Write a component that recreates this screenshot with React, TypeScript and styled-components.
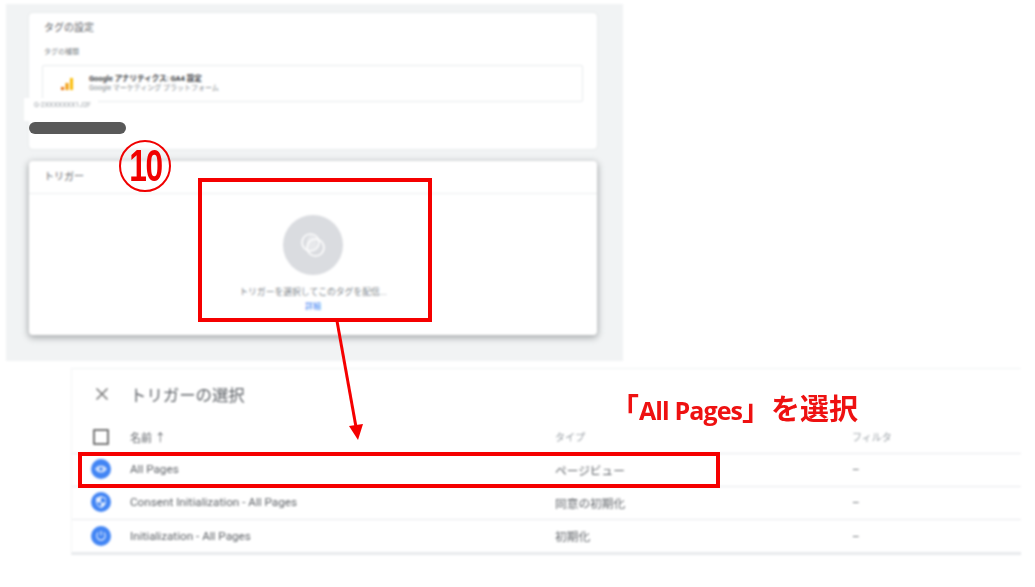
import styled, { createGlobalStyle } from "styled-components"

const GlobalStyle = createGlobalStyle`
html, body {
    margin: 0;
    padding: 0;
    background: #fff;
}
body {
    font-family: Roboto, "Noto Sans CJK JP", sans-serif;
    color: #5f6368;
}
`

const Page = styled.div`
position: relative;
width: 1035px;
height: 587px;
overflow: hidden;
padding: 4px 0 0 6px;
box-sizing: border-box;
`

const Blur = styled.div`
filter: blur(0.8px);
`

const TagPanel = styled.div`
width: 617px;
height: 357px;
box-sizing: border-box;
padding: 9px 26px 0 23px;
background: #f1f3f4;
display: flex;
flex-direction: column;
gap: 12px;
`

const Card = styled.div<{ $height: number; $raised?: boolean }>`
height: ${(p) => p.$height}px;
box-sizing: border-box;
background: #fff;
border-radius: 4px;
box-shadow: ${(p) => (p.$raised ? "0 2px 6px 1px rgba(60, 64, 67, 0.4)" : "0 0 2px rgba(60, 64, 67, 0.12)")};
display: flex;
flex-direction: column;
`

const SettingsBody = styled.div`
padding: 8px 14px 0 15px;
`

const CardTitle = styled.div`
font-size: 10px;
line-height: 14px;
color: #5f6368;
`

const SmallLabel = styled.div`
margin-top: 12px;
font-size: 7px;
line-height: 10px;
color: #80868b;
`

const TypeBox = styled.div`
margin: 8px 0 0 -2px;
height: 37px;
box-sizing: border-box;
border: 1px solid #e8eaed;
border-radius: 2px;
display: flex;
align-items: center;
padding-left: 17px;
gap: 15px;
`

const TypeText = styled.div`
display: flex;
flex-direction: column;
`

const TypeName = styled.span`
font-size: 7.5px;
line-height: 10px;
font-weight: 700;
color: #3c4043;
`

const TypeVendor = styled.span`
font-size: 7px;
line-height: 9px;
color: #80868b;
`

const TriggerHeader = styled.div`
height: 33px;
box-sizing: border-box;
padding: 9px 15px 0;
border-bottom: 1px solid #eceef0;
`

const TriggerBody = styled.div`
display: flex;
flex-direction: column;
align-items: center;
padding: 21px 0 0 0;
width: 568px;
`

const EmptyCircle = styled.div`
width: 60px;
height: 60px;
border-radius: 50%;
background: #dadce0;
display: flex;
align-items: center;
justify-content: center;
`

const EmptyText = styled.div`
margin-top: 11px;
font-size: 8.8px;
line-height: 12px;
color: #80868b;
`

const MoreLink = styled.div`
margin-top: 3px;
font-size: 8px;
line-height: 11px;
color: #4285f4;
`

const PickerPanel = styled.div`
margin: 7px 0 0 65px;
width: 950px;
height: 187px;
box-sizing: border-box;
border-top: 1px solid #f1f3f4;
border-left: 1px solid #f4f5f6;
border-bottom: 3px solid #e8eaed;
`

const PickerHeader = styled.div`
height: 51px;
box-sizing: border-box;
display: flex;
align-items: center;
padding: 0 0 2px 23px;
gap: 21px;
`

const PickerTitle = styled.div`
font-size: 16.4px;
color: #5f6368;
`

const Row = styled.div<{ $head?: boolean }>`
height: ${(p) => (p.$head ? 34 : 33)}px;
box-sizing: border-box;
display: grid;
grid-template-columns: 58px 425px 297px 1fr;
align-items: center;
padding-bottom: ${(p) => (p.$head ? 0 : 2)}px;
font-size: ${(p) => (p.$head ? 11 : 11.7)}px;
border-bottom: 1px solid #e8eaed;
&:last-child {
    border-bottom: none;
}
`

const IconCell = styled.div`
display: flex;
justify-content: center;
`

const CheckBox = styled.div`
width: 12px;
height: 12px;
border: 2px solid #757575;
border-radius: 1px;
`

const BlueDot = styled.div`
width: 20px;
height: 20px;
border-radius: 50%;
background: #4285f4;
display: flex;
align-items: center;
justify-content: center;
`

const NameCell = styled.div`
color: #5f6368;
display: flex;
align-items: center;
gap: 4px;
`

const HeadCell = styled.div`
color: #9aa0a6;
font-size: 10px;
`

const Patch = styled.div`
position: absolute;
left: 24px;
top: 98px;
width: 74px;
height: 23px;
background: #fff;
font-size: 7px;
line-height: 14px;
color: #9aa0a6;
padding-left: 10px;
box-sizing: border-box;
filter: blur(0.8px);
`

const RedactOval = styled.div`
position: absolute;
left: 29px;
top: 122px;
width: 97px;
height: 12px;
border-radius: 6px;
background: #595959;
filter: blur(0.5px);
`

const RedBox = styled.div<{ $x: number; $y: number; $w: number; $h: number }>`
position: absolute;
left: ${(p) => p.$x}px;
top: ${(p) => p.$y}px;
width: ${(p) => p.$w}px;
height: ${(p) => p.$h}px;
box-sizing: border-box;
border: 4px solid #f50000;
filter: blur(0.7px);
`

const StepMark = styled.div`
position: absolute;
left: 119px;
top: 140px;
width: 52px;
height: 52px;
box-sizing: border-box;
border: 2px solid #f00000;
border-radius: 50%;
display: flex;
align-items: center;
justify-content: center;
color: #f00000;
font-family: "Liberation Sans", sans-serif;
font-weight: 700;
font-size: 44px;
letter-spacing: -2px;
filter: blur(0.7px);
`

const StepDigits = styled.span`
display: inline-block;
transform: scaleX(0.72);
`

const Callout = styled.div`
position: absolute;
left: 610px;
top: 390px;
color: #ee1111;
font-family: "Open Sans", "Noto Sans CJK JP", sans-serif;
font-weight: 700;
font-size: 25px;
letter-spacing: -0.9px;
line-height: 34px;
white-space: nowrap;
filter: blur(0.6px);
`

const CalloutJa = styled.span`
font-family: "Noto Sans CJK JP", sans-serif;
font-weight: 700;
font-size: 29px;
letter-spacing: 0;
`

const ArrowSvg = styled.svg`
position: absolute;
left: 320px;
top: 318px;
filter: blur(0.5px);
`

const BarsIcon = () => (
    <svg width="14" height="14" viewBox="0 0 14 14">
        <rect x="1" y="10" width="3" height="3" fill="#e8710a" />
        <rect x="5.5" y="6" width="3" height="7" fill="#f29900" />
        <rect x="10" y="1" width="3" height="12" fill="#fbbc04" />
    </svg>
)

const CirclesIcon = () => (
    <svg width="28" height="28" viewBox="0 0 28 28" fill="none" stroke="#fff" strokeWidth="1.6">
        <circle cx="11.5" cy="11.5" r="8.5" />
        <circle cx="16.5" cy="16.5" r="8.5" />
        <path d="M12 4a8.5 8.5 0 0 1 6 8 8.5 8.5 0 0 1-6 8 8.5 8.5 0 0 1-4-8 8.5 8.5 0 0 1 4-8z" fill="#fff" fillOpacity="0.35" stroke="none" />
    </svg>
)

const CloseIcon = () => (
    <svg width="14" height="14" viewBox="0 0 14 14" stroke="#757575" strokeWidth="1.5">
        <path d="M1.5 1.5l11 11M12.5 1.5l-11 11" />
    </svg>
)

const EyeIcon = () => (
    <svg width="14" height="14" viewBox="0 0 14 14">
        <path d="M1 7c1.500-2.500 3.500-3.600 6-3.600s4.500 1.100 6 3.600c-1.500 2.500-3.500 3.600-6 3.600S2.500 9.500 1 7z" fill="#cfe0fc" />
        <circle cx="7" cy="7" r="1.700" fill="#4285f4" />
    </svg>
)

const ShieldIcon = () => (
    <svg width="14" height="14" viewBox="0 0 14 14">
        <path d="M7 1l5 2v3.500c0 3.200-2.100 5.600-5 6.500-2.900-.9-5-3.300-5-6.500V3z" fill="#e3edfd" />
        <path d="M7 2.500v5H2.800c.3 2 1.900 3.400 4.200 4.200V7.500h4.200c.1-.4.100-.7.100-1V3.800z" fill="#4285f4" />
    </svg>
)

const PowerIcon = () => (
    <svg width="14" height="14" viewBox="0 0 14 14" fill="none" stroke="#cfe0fc" strokeWidth="1.300">
        <path d="M4.300 3.600a4.200 4.200 0 1 0 5.400 0" />
        <path d="M7 2v4.500" />
    </svg>
)

const triggers = [
    { name: "All Pages", type: "ページビュー", icon: <EyeIcon /> },
    { name: "Consent Initialization - All Pages", type: "同意の初期化", icon: <ShieldIcon /> },
    { name: "Initialization - All Pages", type: "初期化", icon: <PowerIcon /> },
]

export default function App() {
    return (
        <Page>
            <GlobalStyle />
            <Blur>
                <TagPanel>
                    <Card $height={136}>
                        <SettingsBody>
                            <CardTitle>タグの設定</CardTitle>
                            <SmallLabel>タグの種類</SmallLabel>
                            <TypeBox>
                                <BarsIcon />
                                <TypeText>
                                    <TypeName>Google アナリティクス: GA4 設定</TypeName>
                                    <TypeVendor>Google マーケティング プラットフォーム</TypeVendor>
                                </TypeText>
                            </TypeBox>
                        </SettingsBody>
                    </Card>
                    <Card $height={174} $raised>
                        <TriggerHeader>
                            <CardTitle>トリガー</CardTitle>
                        </TriggerHeader>
                        <TriggerBody>
                            <EmptyCircle>
                                <CirclesIcon />
                            </EmptyCircle>
                            <EmptyText>トリガーを選択してこのタグを配信...</EmptyText>
                            <MoreLink>詳細</MoreLink>
                        </TriggerBody>
                    </Card>
                </TagPanel>
                <PickerPanel>
                    <PickerHeader>
                        <CloseIcon />
                        <PickerTitle>トリガーの選択</PickerTitle>
                    </PickerHeader>
                    <Row $head>
                        <IconCell>
                            <CheckBox />
                        </IconCell>
                        <NameCell>名前 ↑</NameCell>
                        <HeadCell>タイプ</HeadCell>
                        <HeadCell>フィルタ</HeadCell>
                    </Row>
                    {triggers.map((t) => (
                        <Row key={t.name}>
                            <IconCell>
                                <BlueDot>{t.icon}</BlueDot>
                            </IconCell>
                            <NameCell>{t.name}</NameCell>
                            <NameCell>{t.type}</NameCell>
                            <NameCell>–</NameCell>
                        </Row>
                    ))}
                </PickerPanel>
            </Blur>
            <Patch>G-2XXXXXXX1J2F</Patch>
            <RedactOval />
            <StepMark><StepDigits>10</StepDigits></StepMark>
            <RedBox $x={198} $y={178} $w={234} $h={144} />
            <RedBox $x={78} $y={452} $w={642} $h={36} />
            <ArrowSvg width="60" height="130" viewBox="0 0 60 130">
                <path d="M17 3l19 106" stroke="#f50000" strokeWidth="3" fill="none" />
                <path d="M29 108l14-2-5 16z" fill="#f50000" />
            </ArrowSvg>
            <Callout><CalloutJa>「</CalloutJa>All Pages<CalloutJa>」を選択</CalloutJa></Callout>
        </Page>
    )
}
